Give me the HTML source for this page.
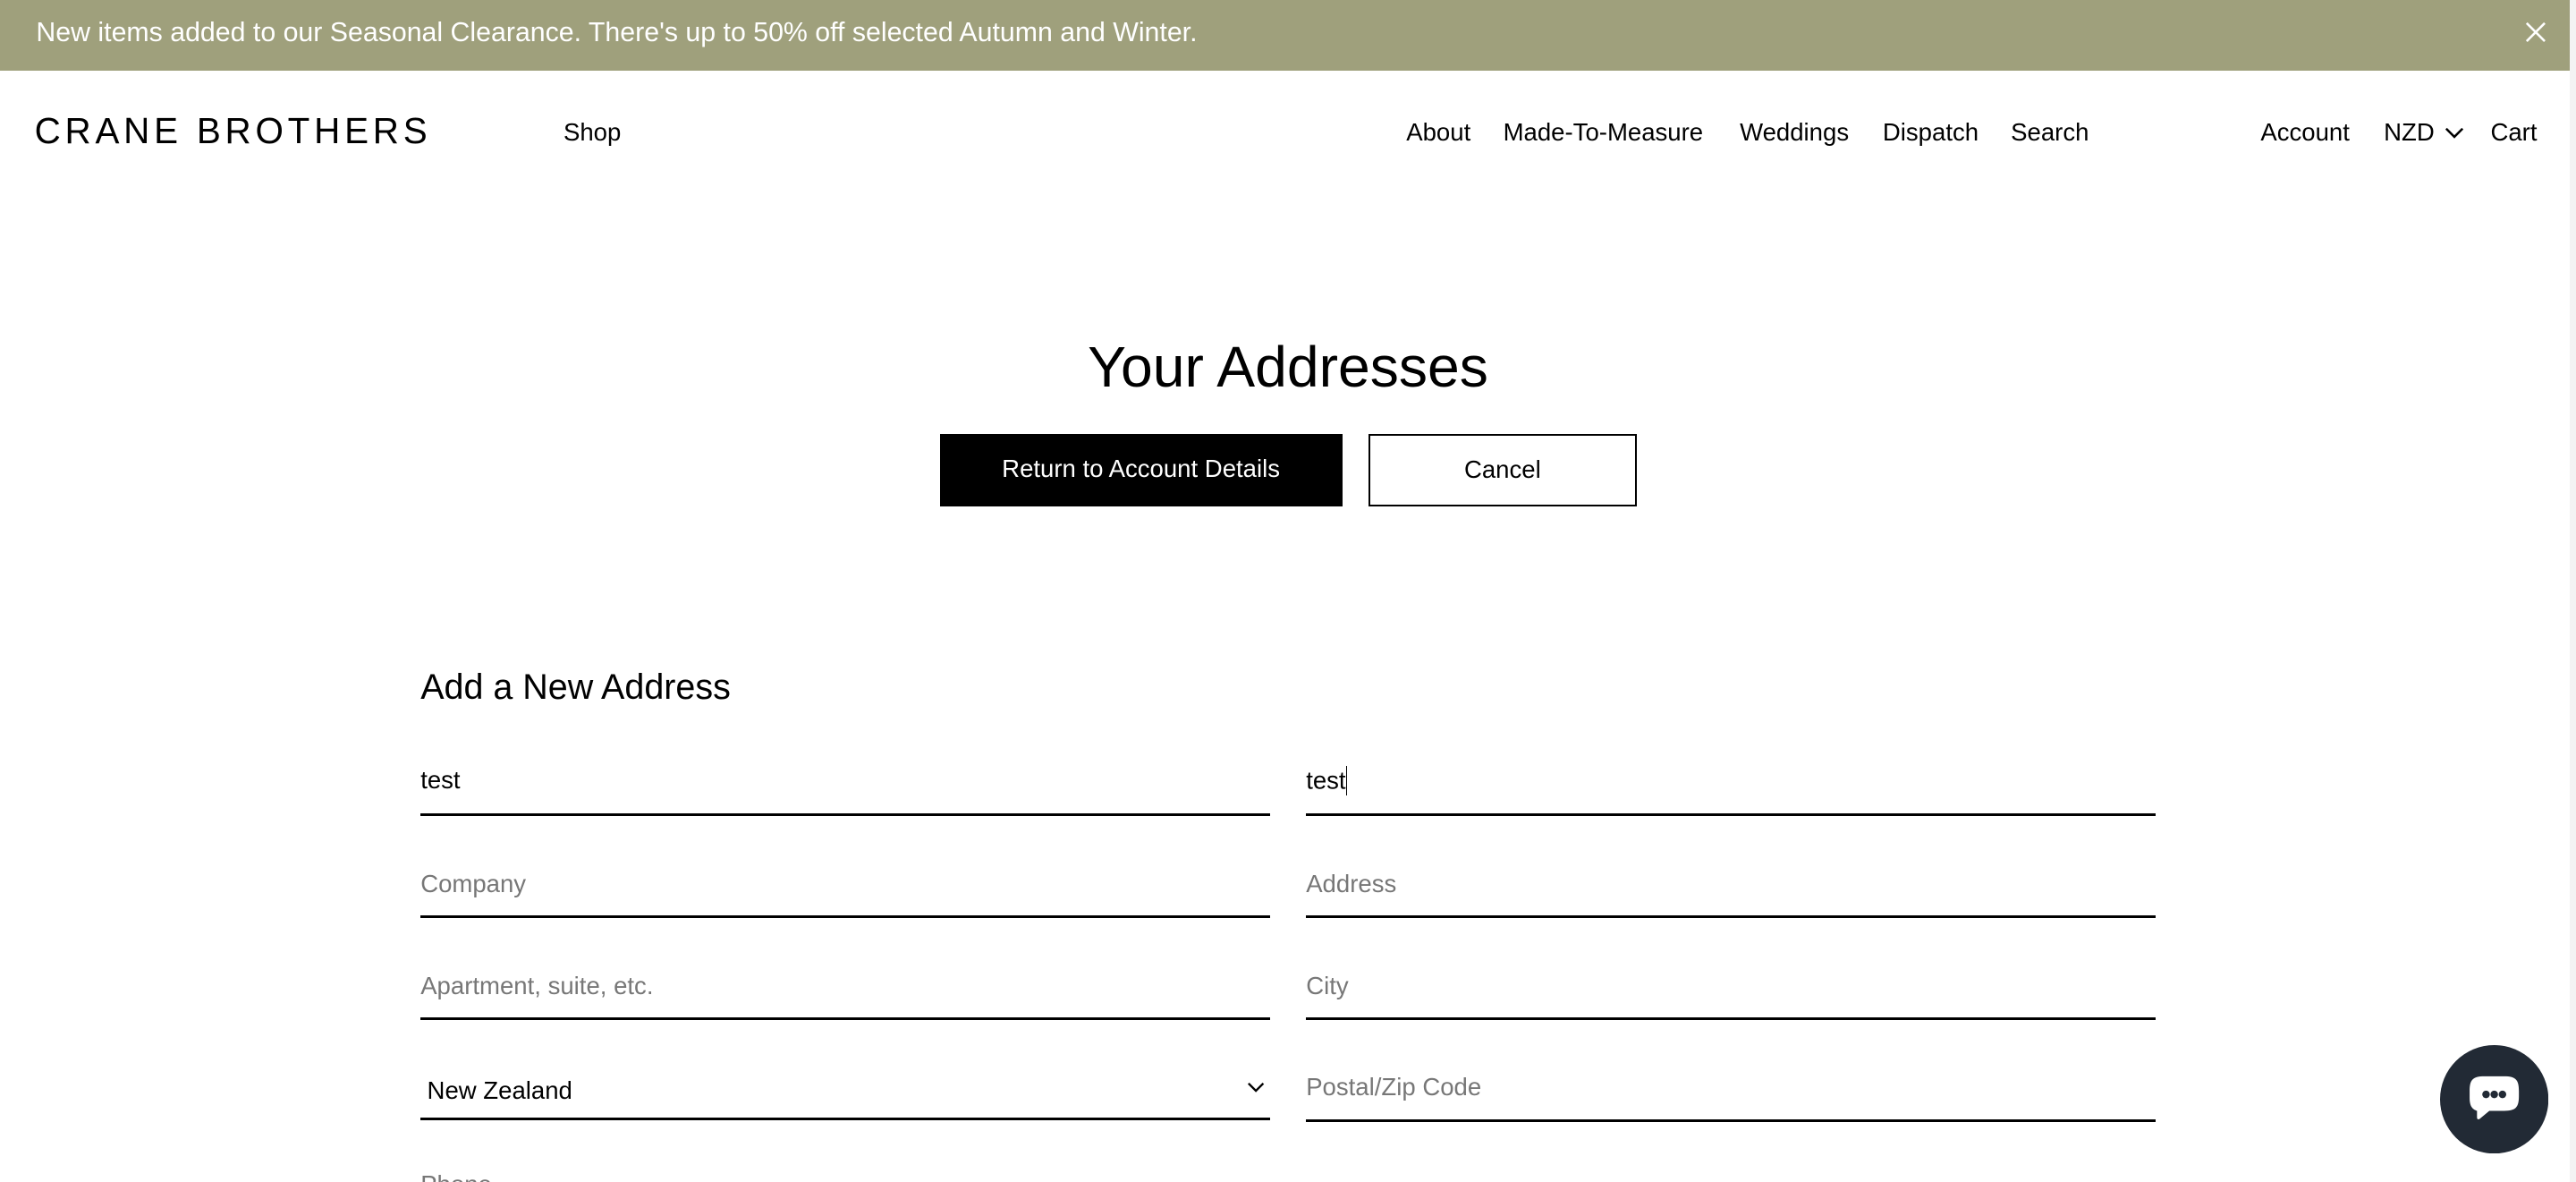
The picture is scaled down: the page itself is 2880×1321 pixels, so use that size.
<!DOCTYPE html>
<html><head><meta charset="utf-8"><style>
html,body{margin:0;padding:0;background:#fff;overflow:hidden}
body{width:1568px;height:719px;zoom:1.83673;position:relative;font-family:"Liberation Sans",sans-serif;color:#000}
.a{position:absolute;white-space:nowrap}
.banner{position:absolute;left:0;top:0;width:1568px;height:43px;background:#9fa07c}
.nav{font-size:15px;top:72px}
.line{position:absolute;height:1.5px;background:#000}
.ph{font-size:15px;color:#777}
.val{font-size:15px;color:#000}
</style></head><body>
<div class="banner"></div>
<div class="a" style="left:22px;top:11px;font-size:16.5px;color:#fff">New items added to our Seasonal Clearance. There's up to 50% off selected Autumn and Winter.</div>
<svg class="a" style="left:1537px;top:13px" width="13" height="13" viewBox="0 0 13 13"><path d="M1 1L12 12M12 1L1 12" stroke="#fff" stroke-width="1.4"/></svg>
<div class="a" style="left:21px;top:67px;font-size:22px;letter-spacing:2.6px">CRANE BROTHERS</div>
<div class="a nav" style="left:343px">Shop</div>
<div class="a nav" style="left:856px">About</div>
<div class="a nav" style="left:915px">Made-To-Measure</div>
<div class="a nav" style="left:1059px">Weddings</div>
<div class="a nav" style="left:1146px">Dispatch</div>
<div class="a nav" style="left:1224px">Search</div>
<div class="a nav" style="left:1376px">Account</div>
<div class="a nav" style="left:1451px">NZD</div>
<svg class="a" style="left:1488px;top:77px" width="12" height="8" viewBox="0 0 12 8"><path d="M1 1.5L6 6.5L11 1.5" stroke="#000" stroke-width="1.4" fill="none"/></svg>
<div class="a nav" style="left:1516px">Cart</div>
<div class="a" style="left:0;width:1568px;text-align:center;top:203px;font-size:35px">Your Addresses</div>
<div class="a" style="left:572px;top:264px;width:245px;height:44px;background:#000;color:#fff;font-size:15px;line-height:43px;text-align:center">Return to Account Details</div>
<div class="a" style="left:833px;top:264px;width:161px;height:42px;border:1.3px solid #000;font-size:15px;line-height:41px;text-align:center">Cancel</div>
<div class="a" style="left:256px;top:406px;font-size:21.5px">Add a New Address</div>
<div class="a val" style="left:256px;top:466px">test</div><div class="line" style="left:256px;top:495px;width:517px"></div>
<div class="a val" style="left:795px;top:466px">test<span style="display:inline-block;width:1px;height:18px;background:#000;vertical-align:-4px"></span></div><div class="line" style="left:795px;top:495px;width:517px"></div>
<div class="a ph" style="left:256px;top:529px">Company</div><div class="line" style="left:256px;top:557px;width:517px"></div>
<div class="a ph" style="left:795px;top:529px">Address</div><div class="line" style="left:795px;top:557px;width:517px"></div>
<div class="a ph" style="left:256px;top:591px">Apartment, suite, etc.</div><div class="line" style="left:256px;top:619px;width:517px"></div>
<div class="a ph" style="left:795px;top:591px">City</div><div class="line" style="left:795px;top:619px;width:517px"></div>
<div class="a val" style="left:260px;top:655px">New Zealand</div>
<svg class="a" style="left:759px;top:658px" width="11" height="7" viewBox="0 0 11 7"><path d="M1 1L5.5 5.5L10 1" stroke="#000" stroke-width="1.3" fill="none"/></svg>
<div class="line" style="left:256px;top:680px;width:517px"></div>
<div class="a ph" style="left:795px;top:653px">Postal/Zip Code</div><div class="line" style="left:795px;top:681px;width:517px"></div>
<div class="a ph" style="left:256px;top:712px">Phone</div>
<div class="a" style="left:1564px;top:0;width:4px;height:719px;background:#f3f3f3"></div>
<svg class="a" style="left:1485px;top:636px" width="66" height="66" viewBox="0 0 66 66"><circle cx="33" cy="33" r="33" fill="#222a35"/><path d="M18 28c0-7 2-9 9-9h12c7 0 9 2 9 9v3c0 7-2 9-9 9h-9l-6 5c-1 .5-1.5 0-1.5-1v-4c-3-1-4.5-3-4.5-8z" fill="#fff"/><circle cx="28" cy="30" r="2.3" fill="#222a35"/><circle cx="33" cy="30" r="2.3" fill="#222a35"/><circle cx="38" cy="30" r="2.3" fill="#222a35"/></svg>
</body></html>
